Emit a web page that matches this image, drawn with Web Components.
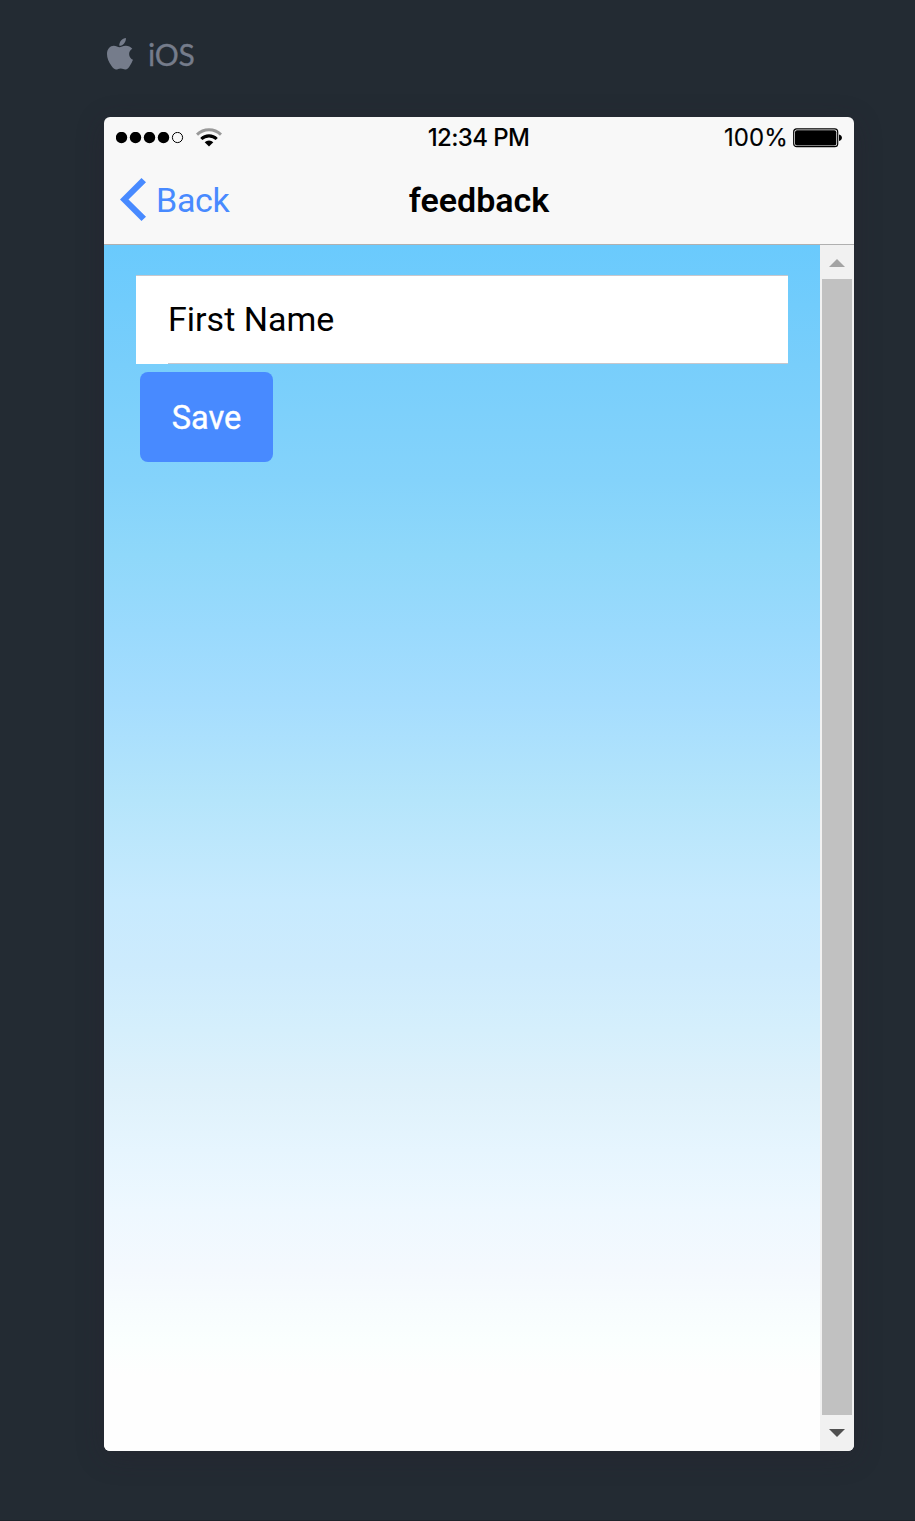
<!DOCTYPE html>
<html lang="en">
<head>
<meta charset="utf-8">
<title>feedback</title>
<style>
html,body{margin:0;height:100%;background:#232b33}
body{font-family:Roboto,"Liberation Sans",sans-serif;overflow:hidden}
</style>
</head>
<body>
<preview-stage>
  <platform-label slot="label">iOS</platform-label>
  <phone-frame>
    <status-bar slot="header" time="12:34 PM" battery="100%"></status-bar>
    <nav-bar slot="header" back="Back">feedback</nav-bar>
    <scroll-pane>
      <text-item>First Name</text-item>
      <action-button>Save</action-button>
    </scroll-pane>
  </phone-frame>
</preview-stage>
<script>
const define = (name, html) => customElements.define(name, class extends HTMLElement {
  connectedCallback() {
    if (this.shadowRoot) return;
    const t = document.createElement('template');
    t.innerHTML = html(this);
    this.attachShadow({mode: 'open'}).append(t.content.cloneNode(true));
  }
});

define('preview-stage', () => `
<style>
:host{display:flex;flex-direction:column;box-sizing:border-box;height:1521px;padding:32px 61px 0 104px;background:#232b33;border-bottom:1px solid #1d232a}
.label{height:85px}
</style><div class="label"><slot name="label"></slot></div><slot></slot>`);

define('platform-label', () => `
<style>
:host{display:flex;align-items:center;gap:15px;height:44px;padding-left:3px;color:#757c8b;font:400 30px/44px Lato,sans-serif}
svg{display:block;width:26px;height:32px}
span{display:block;letter-spacing:-.2px;-webkit-text-stroke:.3px currentColor}
</style>
<svg viewBox="0 0 26 32" fill="currentColor"><path d="M18.900 0c.2 2-.6 4-1.800 5.400-1.200 1.400-3 2.500-4.800 2.400-.2-1.900.7-3.900 1.800-5.200C15.300 1.200 17.300.1 18.900 0ZM25.300 10.700c-2 1.200-3.200 2.900-3.200 5.300 0 2.800 1.700 4.900 3.900 5.800-.8 2.300-2 4.400-3.400 6.400-1.100 1.600-2.300 3.200-4.200 3.200-1.800.1-2.400-1-4.700-1s-2.900 1-4.700 1.100c-1.900.1-3.300-1.800-4.400-3.400C1.600 24.200 0 19.900 0 16c0-5.200 3.200-8.300 6.800-8.300 2.300 0 4.200 1.500 5.700 1.500 1.400 0 3.700-1.700 6.500-1.500 2.300.1 4.700 1.100 6.300 3Z"/></svg>
<span><slot></slot></span>`);

define('phone-frame', () => `
<style>
:host{display:flex;flex-direction:column;width:750px;height:1334px;border-radius:6px;overflow:hidden;background:#f8f8f8;box-shadow:0 6px 28px rgba(42,30,45,.32)}
header{box-sizing:border-box;height:128px;flex:none;border-bottom:1px solid #b0b0b0}
</style><header><slot name="header"></slot></header><slot></slot>`);

define('status-bar', el => `
<style>
:host{display:grid;grid-template-columns:1fr auto 1fr;align-items:center;height:40px;padding:0 11px 0 12px;color:#000;font:500 24px/40px Inter,sans-serif}
svg{display:block}
.left{display:flex;gap:12px;align-items:center}
.right{display:flex;justify-content:flex-end;align-items:center;gap:5px;font-weight:400;padding-top:1px}
.right span{letter-spacing:.1px;-webkit-text-stroke:.15px currentColor}
.time{letter-spacing:-.6px;margin:0 2px 0 0}
</style>
<div class="left">
<svg width="68" height="12" viewBox="0 0 68 12"><circle cx="5.500" cy="5.500" r="5.700"/><circle cx="19.500" cy="5.500" r="5.700"/><circle cx="33.500" cy="5.500" r="5.700"/><circle cx="47.500" cy="5.500" r="5.700"/><circle cx="61.500" cy="5.500" r="5.100" fill="none" stroke="#000" stroke-width="1"/></svg>
<svg width="26" height="19" viewBox="0 0 26 19" fill="none"><path d="M1 6.600a17 17 0 0 1 24 0" stroke="#999" stroke-width="3"/><path d="M5.300 11a11 11 0 0 1 15.400 0" stroke="#000" stroke-width="3.100"/><path d="M8.700 14.300a6 6 0 0 1 8.600 0L13 18.500Z" fill="#000"/></svg>
</div>
<span class="time">${el.getAttribute('time')}</span>
<div class="right"><span>${el.getAttribute('battery')}</span>
<svg width="50" height="20" viewBox="0 0 50 20"><rect x=".7" y=".9" width="44" height="17.800" rx="3" fill="none" stroke="#000" stroke-width="1.200"/><rect x="2" y="2.200" width="41.300" height="15.200" rx="2" fill="#000"/><path d="M46 6.500c3.900.5 3.900 6 0 6.500Z"/></svg>
</div>`);

define('nav-bar', el => `
<style>
:host{display:grid;grid-template-columns:1fr auto 1fr;align-items:center;height:87px;padding:0 16px;font-size:34px;line-height:87px}
.back{display:flex;align-items:center;gap:10px;color:#488aff}
.back span{letter-spacing:-.3px}
svg{display:block;width:26px;height:43px;margin-bottom:2px}
.title{font-weight:600;color:#000}
</style>
<div class="back"><svg viewBox="0 0 26 43" fill="currentColor"><path d="M21.500 0 26 4.300 8.500 21.500 26 38.700 21.500 43 0 21.500Z"/></svg><span>${el.getAttribute('back')}</span></div>
<div class="title"><slot></slot></div>`);

define('scroll-pane', () => `
<style>
:host{display:flex;flex:1;min-height:0}
.content{box-sizing:border-box;flex:1;padding:30px 32px 0;background:linear-gradient(#6acafd 0,#78cefb 120px,#84d3fb 235px,#8fd8fa 310px,#9adafd 385px,#a5ddfe 455px,#b5e5fb 555px,#c7eafe 655px,#cdebfd 720px,#d5effc 785px,#def1fb 840px,#e6f5fe 905px,#eef8ff 965px,#f4f9fe 1025px,#fafffe 1095px,#fefefe 1130px)}
.bar{box-sizing:border-box;width:34px;display:flex;flex-direction:column;align-items:center;background:#f1f1f1}
.thumb{width:30px;flex:1;background:#c1c1c1}
.up,.down{display:flex;align-items:center;justify-content:center}
.up{height:34px;padding-top:2px;box-sizing:border-box}.down{height:36px}
svg{display:block}
</style>
<div class="content"><slot></slot></div>
<div class="bar"><div class="up"><svg width="16" height="8"><path d="M0 8 8 0l8 8Z" fill="#a3a3a3"/></svg></div><div class="thumb"></div><div class="down"><svg width="16" height="8"><path d="M0 0h16L8 8Z" fill="#505050"/></svg></div></div>`);

define('text-item', () => `
<style>
:host{display:block;box-sizing:border-box;height:89px;padding-left:32px;border-top:1px solid #c8c7cc;background:#fff;color:#000;font-size:34px}
div{box-sizing:border-box;height:88px;line-height:86px;border-bottom:1px solid #c8c7cc}
</style><div><slot></slot></div>`);

define('action-button', () => `
<style>
:host{display:flex;align-items:center;justify-content:center;box-sizing:border-box;width:133px;height:90px;padding-top:1px;margin:8px 4px;border-radius:8px;background:#488aff;color:#fff;font-size:32.500px;font-weight:400;-webkit-text-stroke:.4px currentColor}
</style><slot></slot>`);
</script>
</body>
</html>
